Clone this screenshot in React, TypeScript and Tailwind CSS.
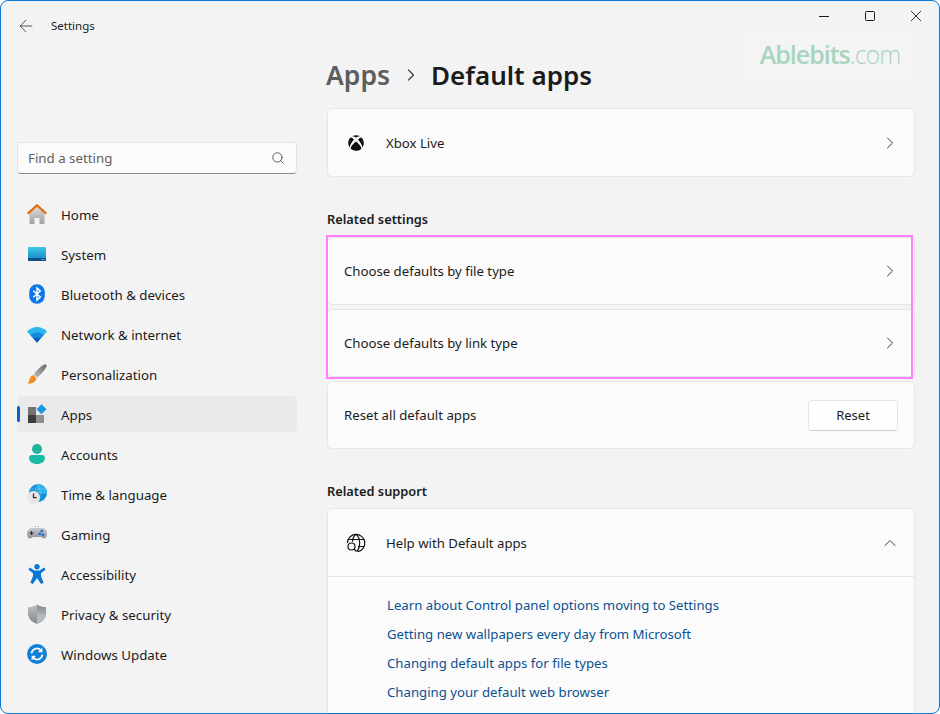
import { ChevronRight, ChevronUp, ArrowLeft, Search } from 'lucide-react';
import { FaXbox } from 'react-icons/fa';
import type { ReactNode } from 'react';

const HomeIcon = () => (
  <svg width="20" height="20" viewBox="0 0 20 20">
    <defs>
      <linearGradient id="homeBody" x1="0" y1="0" x2="0" y2="1">
        <stop offset="0" stopColor="#dcdcdc" />
        <stop offset="1" stopColor="#a0a0a0" />
      </linearGradient>
    </defs>
    <path d="M2.500 9 10 2.500 17.500 9v10a1 1 0 0 1-1 1h-4v-6h-5v6h-4a1 1 0 0 1-1-1z" fill="url(#homeBody)" />
    <path d="M.8 9.600 10 1.300l9.200 8.300" fill="none" stroke="#e56c0a" strokeWidth="2.200" />
  </svg>
);

const SystemIcon = () => (
  <svg width="20" height="20" viewBox="0 0 20 20">
    <defs>
      <linearGradient id="sysBody" x1="0" y1="0" x2="0" y2="1">
        <stop offset="0" stopColor="#3cc8e6" />
        <stop offset="1" stopColor="#1286c2" />
      </linearGradient>
    </defs>
    <rect x="1" y="3" width="18" height="14" rx="1.200" fill="url(#sysBody)" />
    <path d="M1 14h18v2a1 1 0 0 1-1 1H2a1 1 0 0 1-1-1z" fill="#0b4f86" />
    <rect x="14.500" y="15" width="1" height="1" fill="#7fd0ee" />
    <rect x="16.300" y="15" width="1" height="1" fill="#7fd0ee" />
  </svg>
);

const BluetoothIcon = () => (
  <svg width="20" height="20" viewBox="0 0 20 20">
    <rect x="2.200" y="0.300" width="15.600" height="19.400" rx="7.800" fill="#0a78ea" />
    <path d="M6.300 6.700 13.300 13 10 16V4l3.300 3-7 6.300" fill="none" stroke="#fff" strokeWidth="1.500" />
  </svg>
);

const WifiIcon = () => (
  <svg width="20" height="20" viewBox="0 0 20 20">
    <path d="M0 7.500C5.500 1.500 14.500 1.500 20 7.500L10 18.500z" fill="#2bb6ee" />
    <path d="M3.400 11.300c3.800-3.800 9.400-3.800 13.200 0L10 18.500z" fill="#118ae0" />
    <path d="M6.600 14.800c2-1.700 4.800-1.700 6.800 0L10 18.500z" fill="#0a5cb2" />
  </svg>
);

const BrushIcon = () => (
  <svg width="20" height="20" viewBox="0 0 20 20">
    <defs>
      <linearGradient id="brushHandle" x1="1" y1="0" x2="0" y2="1">
        <stop offset="0" stopColor="#6b6b6b" />
        <stop offset="1" stopColor="#bdbdbd" />
      </linearGradient>
    </defs>
    <path d="M17.800.3c1.200.2 1.900 1 1.800 2C17.800 6.500 13.500 11 10 13.600L6.800 10.400C9.300 6.800 13.800 2 17.800.3z" fill="url(#brushHandle)" />
    <path d="M6.200 11 9.400 14.200c-.2 3.400-4 5.800-9.400 5.300 1.700-.8 2.100-1.800 2.400-3.500C2.900 13.600 4 11.700 6.200 11z" fill="#f28a1e" />
  </svg>
);

const AppsIcon = () => (
  <svg width="20" height="20" viewBox="0 0 20 20">
    <rect x="1" y="3" width="8" height="8" fill="#737373" />
    <rect x="1" y="11" width="8" height="8" rx="0.500" fill="#3c3c3c" />
    <rect x="9" y="11" width="8" height="8" fill="#8f8f8f" />
    <path d="M14.500.2 19.500 5.200l-5 5-5-5z" fill="#1a95e8" />
  </svg>
);

const AccountsIcon = () => (
  <svg width="20" height="20" viewBox="0 0 20 20">
    <circle cx="10" cy="5" r="5" fill="#1fb39d" />
    <path d="M2 14c0-1.700 1.200-3 3-3h10c1.800 0 3 1.300 3 3 0 3.800-3.600 6-8 6s-8-2.200-8-6z" fill="#18bca6" />
  </svg>
);

const TimeIcon = () => (
  <svg width="20" height="20" viewBox="0 0 20 20">
    <circle cx="11" cy="9" r="9" fill="#1391dc" />
    <path d="M11 0a9 9 0 0 1 9 9h-9z" fill="#2fb2e8" />
    <path d="M11 0v18M2 9h18M2.500 5h17M11 0c-3 3-3 15 0 18M11 0c3 3 3 15 0 18" fill="none" stroke="#6cc6ee" strokeWidth="0.600" />
    <circle cx="6.500" cy="13.500" r="6.500" fill="#e6e6e6" />
    <path d="M6.500 9.500v4.200h3.200" fill="none" stroke="#333" strokeWidth="1.300" />
  </svg>
);

const GamingIcon = () => (
  <svg width="20" height="20" viewBox="0 0 20 20">
    <defs>
      <linearGradient id="padBody" x1="0" y1="0" x2="0" y2="1">
        <stop offset="0" stopColor="#c9ccd1" />
        <stop offset="1" stopColor="#8e9299" />
      </linearGradient>
    </defs>
    <path d="M5 4h10c3 0 5 2.500 5 5.500 0 3-1.300 5-3 5-1.300 0-2-.9-3-1.500H6c-1 .6-1.700 1.500-3 1.500-1.700 0-3-2-3-5C0 6.500 2 4 5 4z" fill="url(#padBody)" />
    <path d="M4.500 7v4M2.500 9h4" stroke="#2e2e2e" strokeWidth="1.200" />
    <circle cx="14.700" cy="7" r="1.300" fill="#1169d2" />
    <circle cx="12.700" cy="9.700" r="1.300" fill="#1169d2" />
    <circle cx="15.800" cy="10.800" r="1.300" fill="#1169d2" />
    <rect x="8" y="2" width="1" height="1" fill="#8e9299" />
    <rect x="11" y="2" width="1" height="1" fill="#8e9299" />
  </svg>
);

const AccessibilityIcon = () => (
  <svg width="20" height="20" viewBox="0 0 20 20">
    <circle cx="10" cy="2.800" r="2.700" fill="#0a78d7" />
    <path d="M2.900 3.500 7.300 6.600h5.400l4.400-3.100 1.500 2-4.600 3.700v3l2.700 6.600-2.600 1.200L10 14l-4.100 6-2.600-1.200L6 12.200v-3L1.400 5.500z" fill="#0a78d7" />
  </svg>
);

const ShieldIcon = () => (
  <svg width="20" height="20" viewBox="0 0 20 20">
    <defs>
      <linearGradient id="shieldL" x1="0" y1="0" x2="0" y2="1">
        <stop offset="0" stopColor="#bcc0c4" />
        <stop offset="1" stopColor="#83878c" />
      </linearGradient>
      <linearGradient id="shieldR" x1="0" y1="0" x2="0" y2="1">
        <stop offset="0" stopColor="#85898e" />
        <stop offset="1" stopColor="#a8acb0" />
      </linearGradient>
    </defs>
    <path d="M10 .4c2.500 1.700 5.200 2.600 9 2.800v6C19 14.600 15.200 18 10 19.800 4.800 18 1 14.600 1 9.200v-6C4.800 3 7.500 2.100 10 .4z" fill="url(#shieldL)" />
    <path d="M10 .4c2.500 1.700 5.200 2.600 9 2.800V10h-9z" fill="url(#shieldR)" />
    <path d="M10 10h9c-.6 4.800-4.200 8.100-9 9.800z" fill="#b5b9bd" />
  </svg>
);

const UpdateIcon = () => (
  <svg width="20" height="20" viewBox="0 0 20 20">
    <circle cx="10" cy="10" r="10" fill="#0f7fd8" />
    <path d="M4.500 9.300A5.500 5.500 0 0 1 14 6.300" fill="none" stroke="#fff" strokeWidth="1.700" />
    <path d="M15.500 10.700A5.500 5.500 0 0 1 6 13.700" fill="none" stroke="#fff" strokeWidth="1.700" />
    <path d="M15.400 3.600V8.200h-4.600z" fill="#fff" />
    <path d="M4.600 16.400V11.800h4.600z" fill="#fff" />
  </svg>
);

const HelpIcon = () => (
  <svg width="20" height="20" viewBox="0 0 20 20" fill="none" stroke="#111" strokeWidth="1.200">
    <path d="M1.400 10A8.700 8.700 0 1 1 12 18.600" />
    <path d="M10 1.200C7.600 3 6.600 5.500 6.400 8.800M10 1.200c2.700 2.200 3.700 5.300 3.700 9s-1 6-2.700 8.500" />
    <path d="M1.800 6.500h16.400M12 13.500h6.500" />
    <circle cx="5.500" cy="13.500" r="3.500" />
    <path d="m8 16 2.500 2.500" />
  </svg>
);

const navItems: { label: string; icon: ReactNode; active?: boolean }[] = [
  { label: 'Home', icon: <HomeIcon /> },
  { label: 'System', icon: <SystemIcon /> },
  { label: 'Bluetooth & devices', icon: <BluetoothIcon /> },
  { label: 'Network & internet', icon: <WifiIcon /> },
  { label: 'Personalization', icon: <BrushIcon /> },
  { label: 'Apps', icon: <AppsIcon />, active: true },
  { label: 'Accounts', icon: <AccountsIcon /> },
  { label: 'Time & language', icon: <TimeIcon /> },
  { label: 'Gaming', icon: <GamingIcon /> },
  { label: 'Accessibility', icon: <AccessibilityIcon /> },
  { label: 'Privacy & security', icon: <ShieldIcon /> },
  { label: 'Windows Update', icon: <UpdateIcon /> },
];

const helpLinks = [
  'Learn about Control panel options moving to Settings',
  'Getting new wallpapers every day from Microsoft',
  'Changing default apps for file types',
  'Changing your default web browser',
];

function Card({ children, className = '' }: { children: ReactNode; className?: string }) {
  return (
    <div className={`flex items-center rounded-[5px] border border-[#e6e6e6] bg-[#fbfbfb] pl-4 pr-4 text-[13.2px] text-[#1b1b1b] ${className}`}>
      {children}
    </div>
  );
}

const Chevron = () => <ChevronRight size={20} strokeWidth={1.2} className="ml-auto -mr-[2px] text-[#3a3a3a]" />;

export default function App() {
  return (
    <div className="relative flex h-[714px] w-[940px] flex-col overflow-hidden rounded-[8px] border border-[#0a78d4] bg-[#f3f3f3] font-['Noto_Sans',sans-serif] text-[13.3px] text-[#1b1b1b]">
      <header className="flex h-[49px] shrink-0 items-center pl-[15px]">
        <ArrowLeft size={20} strokeWidth={1.2} className="text-[#555]" />
        <span className="ml-[15px] text-[11.5px] text-[#1b1b1b]">Settings</span>
        <div className="ml-auto flex items-center gap-[36px] self-start pr-[18px] pt-[10px] text-[#1b1b1b]">
          <svg width="10" height="10" viewBox="0 0 10 10" stroke="currentColor" strokeWidth="1">
            <path d="M0 5.500h10" />
          </svg>
          <svg width="10" height="10" viewBox="0 0 10 10" fill="none" stroke="currentColor" strokeWidth="1">
            <rect x="0.500" y="0.500" width="9" height="9" rx="1" />
          </svg>
          <svg width="10" height="10" viewBox="0 0 10 10" stroke="currentColor" strokeWidth="0.900">
            <path d="m0 0 10 10M10 0 0 10" />
          </svg>
        </div>
      </header>

      <div className="flex min-h-0 flex-1">
        <aside className="w-[326px] shrink-0 pl-4 pt-[92px]">
          <div className="flex h-8 w-[280px] items-center justify-between rounded-[4px] border border-[#e5e5e5] border-b-[#8a8a8a] bg-[#fbfbfb] pl-[10px] pr-[11px] text-[#5f5f5f]">
            <span className="mt-[2px]">Find a setting</span>
            <Search size={14} strokeWidth={1.300} className="text-[#333]" />
          </div>
          <nav className="mt-[22px] flex w-[280px] flex-col gap-1">
            {navItems.map((item) => (
              <div
                key={item.label}
                className={`relative flex h-9 items-center rounded-[4px] pl-[10px] ${item.active ? 'bg-[#eaeaea]' : ''}`}
              >
                {item.active && <span className="absolute left-0 top-[10px] h-4 w-[3px] rounded-full bg-[#0a63c4]" />}
                {item.icon}
                <span className="ml-[14px] mt-[4px] text-[#1b1b1b]">{item.label}</span>
              </div>
            ))}
          </nav>
        </aside>

        <main className="min-w-0 flex-1">
          <div className="mt-[7px] -ml-[1px] flex h-[36px] items-center text-[26px] leading-9 font-semibold">
            <span className="text-[26.5px] text-[#5d5d5d]">Apps</span>
            <ChevronRight size={20} strokeWidth={1.5} className="ml-[11px] mr-[10px] text-[#444]" />
            <span>Default apps</span>
          </div>

          <div className="mt-[15px] w-[588px]">
            <Card className="h-[69px]">
              <span className="flex w-[42px] pl-[4px]">
                <FaXbox size={16} className="text-[#111]" />
              </span>
              <span className="mt-[2px]">Xbox Live</span>
              <Chevron />
            </Card>

            <h2 className="mt-8 mb-2 text-[12.8px] leading-5 font-semibold">Related settings</h2>
            <div className="relative flex flex-col gap-1">
              <Card className="h-[68px]">
                <span className="mt-[2px]">Choose defaults by file type</span>
                <Chevron />
              </Card>
              <Card className="h-[68px]">
                <span className="mt-[2px]">Choose defaults by link type</span>
                <Chevron />
              </Card>
              <div className="absolute -top-[2px] -left-[1px] h-[144px] w-[587px] border-2 border-[#ff80ff]" />
            </div>
            <Card className="mt-1 h-[68px]">
              <span className="mt-[2px]">Reset all default apps</span>
              <button className="ml-auto h-[31px] w-[90px] rounded-[4px] border border-[#e5e5e5] border-b-[#cfcfcf] bg-[#fefefe] pt-[1px] text-[13px]">
                Reset
              </button>
            </Card>

            <h2 className="mt-8 mb-[7px] text-[12.8px] leading-5 font-semibold">Related support</h2>
            <div className="rounded-[5px] border border-[#e6e6e6] bg-[#fbfbfb] text-[13.2px]">
              <div className="flex h-[68px] items-center border-b border-[#e6e6e6] pl-[18px] pr-4">
                <HelpIcon />
                <span className="ml-[20px] mt-[2px]">Help with Default apps</span>
                <ChevronUp size={20} strokeWidth={1.2} className="ml-auto -mr-[2px] text-[#3a3a3a]" />
              </div>
              <ul className="flex flex-col gap-[9px] pl-[59px] pt-[18px] pb-6 text-[#0b5192]">
                {helpLinks.map((link) => (
                  <li key={link} className="leading-5">{link}</li>
                ))}
              </ul>
            </div>
          </div>
        </main>
      </div>

      <div className="absolute right-[24px] top-[29px] flex h-[48px] w-[170px] items-center justify-center bg-[#f4f4f4] text-[25px] leading-none text-[#a8d5bf] font-['Open_Sans',sans-serif]">
        <span className="font-semibold tracking-[-1px]">Ablebits</span>
        <span className="font-light tracking-[-1px]">.com</span>
      </div>
    </div>
  );
}
